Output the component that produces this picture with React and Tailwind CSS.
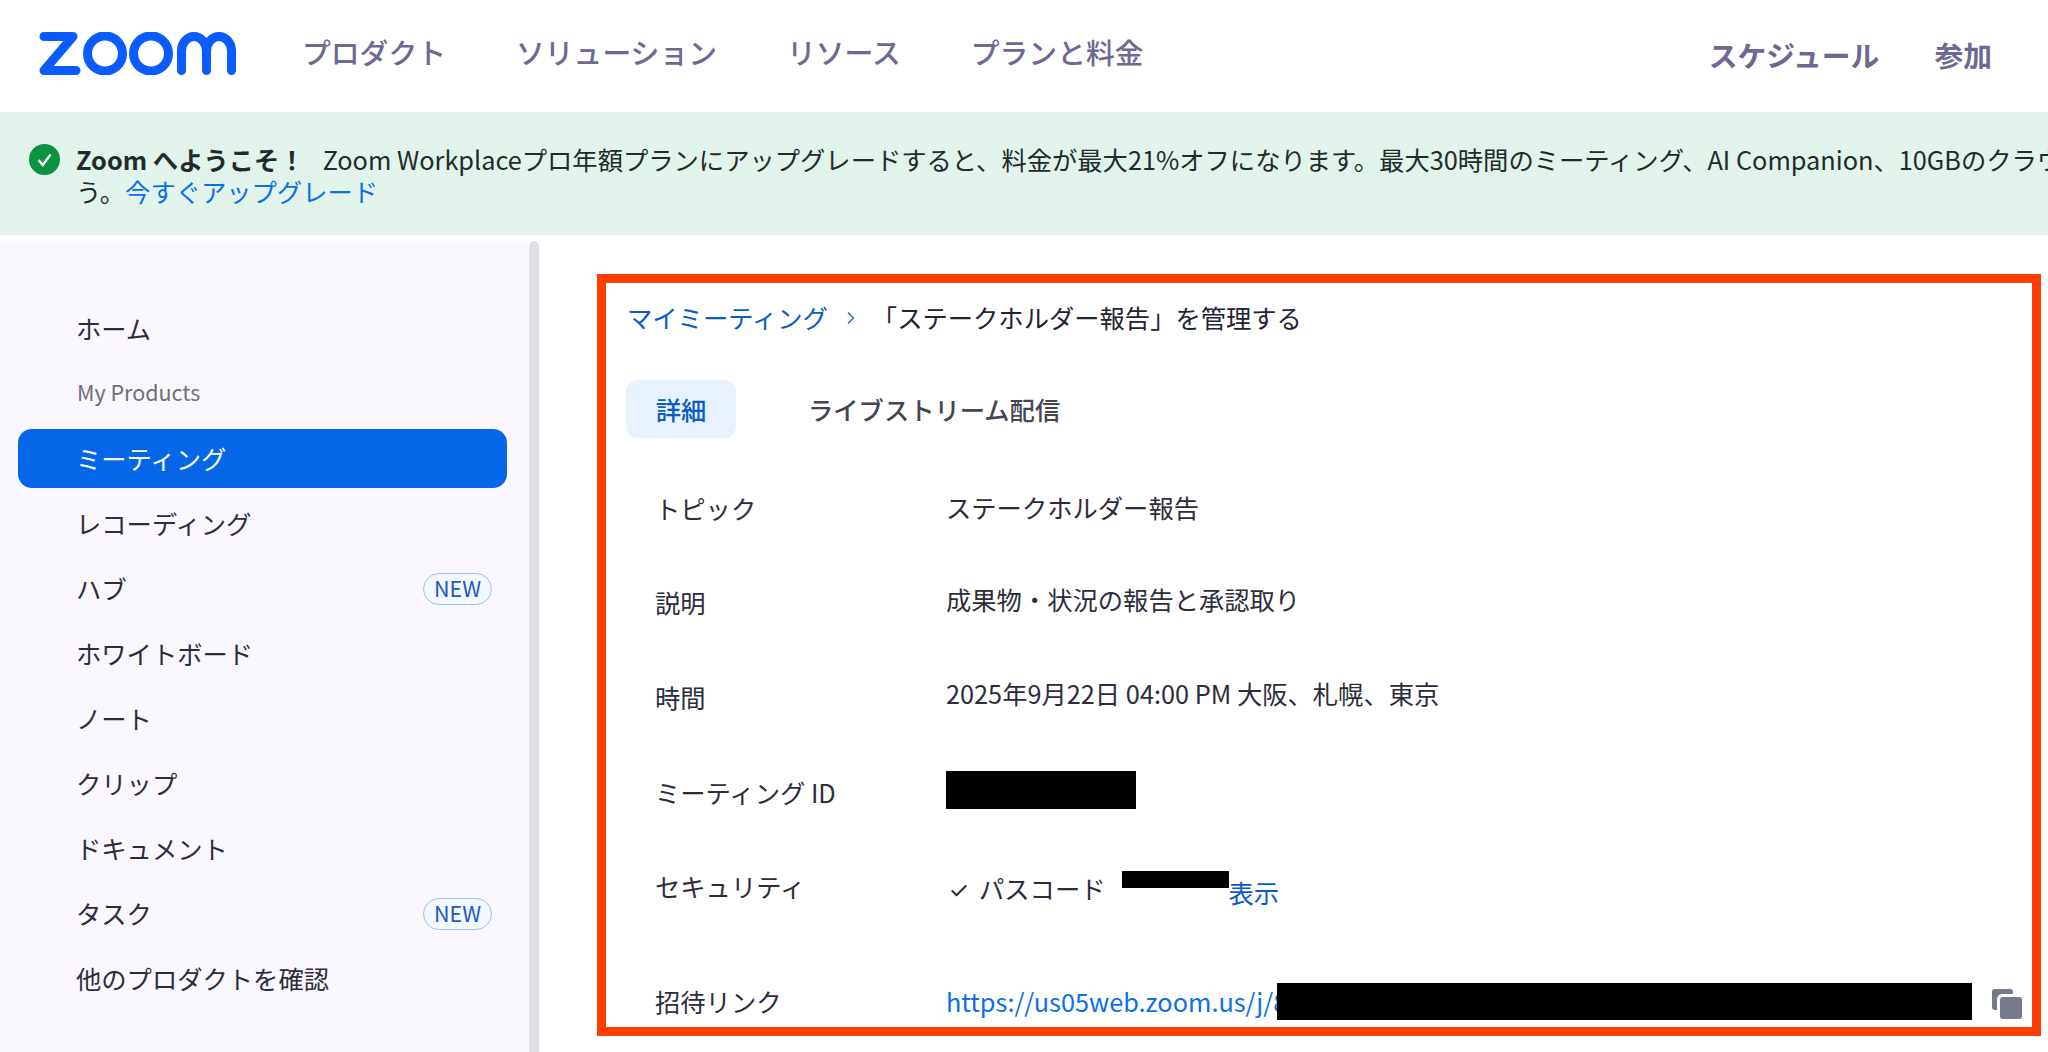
import React from 'react';
import { Check, ChevronRight } from 'lucide-react';

const topNav = ['プロダクト', 'ソリューション', 'リソース', 'プランと料金'];

const sideItems = [
  { label: 'レコーディング' },
  { label: 'ハブ', badge: true },
  { label: 'ホワイトボード' },
  { label: 'ノート' },
  { label: 'クリップ' },
  { label: 'ドキュメント' },
  { label: 'タスク', badge: true },
  { label: '他のプロダクトを確認' },
];

const ZoomLogo = () => (
  <svg width="199" height="43" viewBox="0 0 199 43" fill="none" stroke="#0b5cff" strokeWidth="9" className="-mt-[6px]">
    <path d="M5 4.5H34L5 38.5H37" strokeLinejoin="round" strokeLinecap="round" />
    <circle cx="66" cy="21.5" r="17.5" />
    <circle cx="112" cy="21.5" r="17.5" />
    <path d="M142.5 38.5V19A12.5 14.5 0 0 1 167.5 19V38.5M167.5 19A12.5 14.5 0 0 1 192.5 19V38.5" strokeLinecap="round" />
  </svg>
);

const CopyIcon = () => (
  <svg width="30" height="30" viewBox="0 0 30 30" fill="#757a8c">
    <path d="M3 0H18A3 3 0 0 1 21 3V5H10A5 5 0 0 0 5 10V21H3A3 3 0 0 1 0 18V3A3 3 0 0 1 3 0Z" />
    <rect x="8" y="8" width="22" height="22" rx="3" />
  </svg>
);

const NavItem = ({ label, badge, active }) => (
  <div className={`h-[65px] flex items-center justify-between pl-[76px] pr-[37px] text-[25.3px] ${active ? 'text-white' : 'text-[#2d2d3a]'}`}>
    <span>{label}</span>
    {badge && (
      <span className="w-[69px] h-[32px] flex items-center justify-center rounded-full border border-[#9dc3f7] bg-[#f3f7fe] text-[21.5px] text-[#1f5bb5]">NEW</span>
    )}
  </div>
);

const Row = ({ label, className, children }) => (
  <div className={`flex items-center text-[25.3px] text-[#2d2d3a] ${className}`}>
    <div className="w-[320px] pl-[29px] shrink-0">{label}</div>
    {children}
  </div>
);

export default function App() {
  return (
    <div className="w-[2048px] h-[1052px] overflow-hidden bg-white flex flex-col font-['Noto_Sans_CJK_JP',sans-serif]">
      <header className="h-[112px] shrink-0 flex items-center pl-[39px] pr-[56px]">
        <ZoomLogo />
        <nav className="flex gap-[70px] ml-[64px] text-[28.8px] font-medium text-[#6e6893] -mt-[8px]">
          {topNav.map((t) => (
            <span key={t}>{t}</span>
          ))}
        </nav>
        <div className="ml-auto flex gap-[55px] text-[28.8px] font-bold text-[#6e6893] -mt-[3px]">
          <span>スケジュール</span>
          <span>参加</span>
        </div>
      </header>

      <div className="h-[123px] shrink-0 bg-[#e2f3ec] flex pl-[29px] pt-[31px] text-[25.3px] leading-[32px] text-[#232a2a] overflow-hidden">
        <svg width="31" height="31" viewBox="0 0 31 31" className="shrink-0 mt-[1px]">
          <circle cx="15.5" cy="15.5" r="15.5" fill="#0a9340" />
          <path d="M9.5 16L13.8 21L21.5 10.5" fill="none" stroke="white" strokeWidth="2.4" />
        </svg>
        <div className="ml-[16px] whitespace-nowrap">
          <div>
            <span className="font-bold mr-[18px]">Zoom へようこそ！</span>
            Zoom Workplaceプロ年額プランにアップグレードすると、料金が最大21%オフになります。最大30時間のミーティング、AI Companion、10GBのクラウ
          </div>
          <div>
            う。<span className="text-[#0b6fe8]">今すぐアップグレード</span>
          </div>
        </div>
      </div>

      <div className="flex flex-1 mt-[6px] min-h-0">
        <aside className="w-[529px] shrink-0 bg-[#faf7fe] pt-[55px]">
          <NavItem label="ホーム" />
          <div className="h-[63px] flex items-center pl-[77px] text-[21.5px] text-[#6f6f78]">My Products</div>
          <div className="ml-[18px] mr-[22px] h-[59px] rounded-[14px] bg-[#0666e8] mt-[5px] mb-[3px] flex items-center">
            <div className="-ml-[18px] -mr-[22px] flex-1">
              <NavItem label="ミーティング" active />
            </div>
          </div>
          {sideItems.map((item) => (
            <NavItem key={item.label} label={item.label} badge={item.badge} />
          ))}
        </aside>
        <div className="w-[10px] shrink-0 bg-[#e0dfe4] rounded-t-[5px]" />

        <main className="flex-1 min-w-0 pt-[33px] pl-[58px] pr-[7px]">
          <div className="h-[762px] border-[9px] border-[#ff3d00] pl-[20px] pr-[10px] pt-[11px]">
            <div className="h-[48px] flex items-center text-[25.3px] text-[#232333] ml-[1px]">
              <span className="text-[#0b5cc4]">マイミーティング</span>
              <ChevronRight className="w-[20px] h-[20px] mx-[13px] text-[#3a6fb5]" strokeWidth={2} />
              <span className="-ml-[2px]">「ステークホルダー報告」を管理する</span>
            </div>
            <div className="flex items-center mt-[38px] text-[25.3px]">
              <div className="w-[110px] h-[58px] pt-[1px] rounded-[12px] bg-[#e8f1fe] flex items-center justify-center font-medium text-[#0b5cc4]">詳細</div>
              <div className="ml-[72px] pt-[1px] font-medium text-[#45454f]">ライブストリーム配信</div>
            </div>

            <Row label="トピック" className="h-[94px] mt-[24px]">
              <span className="-mt-[2px]">ステークホルダー報告</span>
            </Row>
            <Row label="説明" className="h-[94px]">
              <span className="-mt-[6px]">成果物・状況の報告と承認取り</span>
            </Row>
            <Row label="時間" className="h-[96px]">
              <span className="-mt-[8px]">2025年9月22日 04:00 PM 大阪、札幌、東京</span>
            </Row>
            <Row label="ミーティング ID" className="h-[94px]">
              <div className="w-[190px] h-[38px] bg-black -mt-[6px]" />
            </Row>
            <Row label="セキュリティ" className="h-[94px]">
              <div className="flex items-start">
                <Check className="w-[20px] h-[20px] ml-[3px] mt-[18px]" strokeWidth={2.5} />
                <span className="ml-[10px] mt-[7px]">パスコード</span>
                <div className="w-[107px] h-[17px] bg-black ml-[16px] mt-[8px]" />
                <span className="text-[#0b5cc4] mt-[11px]">表示</span>
              </div>
            </Row>
            <Row label="招待リンク" className="h-[115px] pt-[20px]">
              <span className="text-[#0b6fe8] whitespace-nowrap w-[331px]">https://us05web.zoom.us/j/8</span>
              <div className="relative w-[696px] h-[37px] bg-black -mt-[1px]" />
              <div className="ml-[20px] mt-[4px]">
                <CopyIcon />
              </div>
            </Row>
          </div>
        </main>
      </div>
    </div>
  );
}
